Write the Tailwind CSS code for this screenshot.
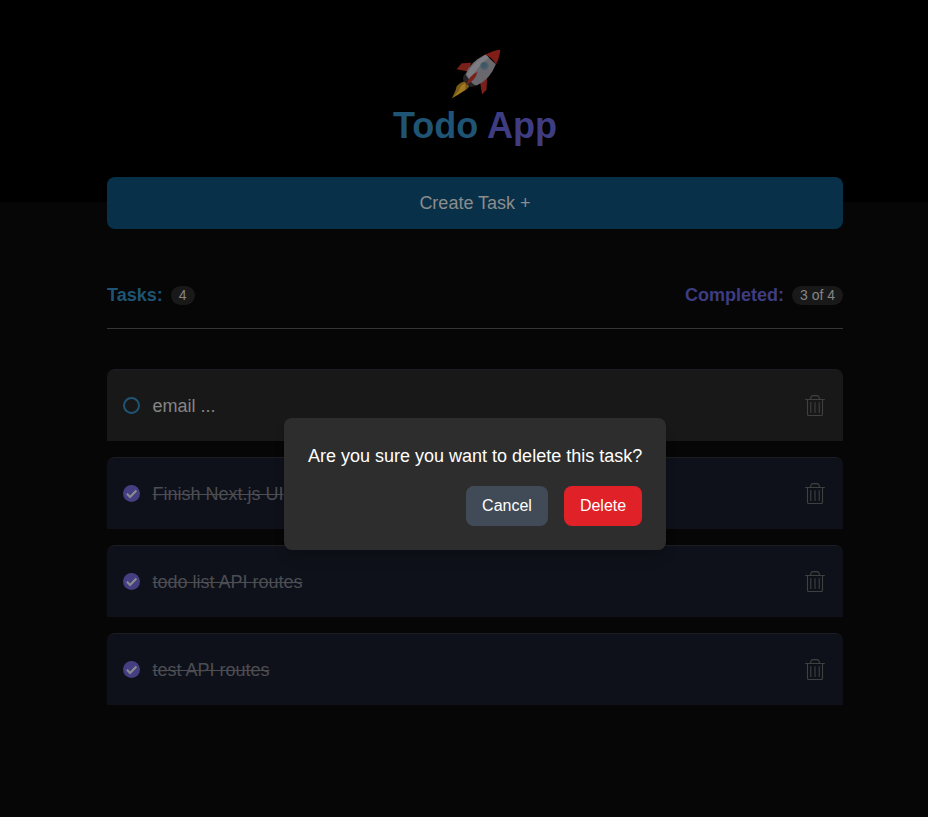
<!DOCTYPE html>
<html lang="en">
<head>
<meta charset="utf-8">
<title>Todo App</title>
<script src="https://cdn.jsdelivr.net/npm/@tailwindcss/browser@4"></script>
</head>
<body class="overflow-hidden bg-[#060606]">
<svg class="hidden">
  <symbol id="trash" viewBox="0 0 20 22">
    <g fill="none" stroke="currentColor" stroke-width="1.1" stroke-linecap="round" stroke-linejoin="round">
      <path d="M.6 4.5h18.8M2.5 4.5v14.7q0 1.3 1.3 1.3h12.4q1.3 0 1.3-1.3V4.5M5.6 4.3V4Q5.7.6 8.4.6h3.2q2.7 0 2.8 3.4v.3M5.8 7.5v10M10 7.5v10M14.2 7.5v10"/>
    </g>
  </symbol>
  <symbol id="check" viewBox="0 0 17 17">
    <circle cx="8.5" cy="8.5" r="8.5" fill="#433f82"/>
    <path d="M3.9 8.7l3.2 3.2 6.3-6.5" fill="none" stroke="#8c8c8c" stroke-width="2.1"/>
  </symbol>
</svg>
<div class="relative h-[817px] w-[950px] overflow-hidden font-['Liberation_Sans',Arial,sans-serif] text-lg">
  <header class="flex h-[202px] flex-col items-center bg-black pt-[49px]">
    <svg class="h-[51px] w-[51px]" viewBox="30 27 148 148" aria-label="Rocket">
      <path d="M78 119Q57 124 49 136Q48 146 35 171Q56 159 70 149Q87 142 87 126Z" fill="#7c5b16"/>
      <path d="M75 126Q59 132 57 147L40 166Q61 154 74 146Z" fill="#a07a22"/>
      <path d="M92 67L64 68L49 86L83 92ZM121 120L138 106L136 145L123 159L117 122Z" fill="#782019"/>
      <path d="M73 99Q66 108 68 118L88 137Q100 138 108 130Z" fill="#242426"/>
      <path d="M75 101Q87 65 133 43L163 71Q146 116 107 133Q96 133 75 101Z" fill="#68686e"/>
      <path d="M78 101Q94 69 133 43L143 52Q108 78 89 116Z" fill="#7c7c82"/>
      <path d="M132 44Q153 31 176 29Q174 53 163 72Q152 50 132 44Z" fill="#811d17"/>
      <circle cx="130" cy="76" r="12" fill="#4d5e68"/><circle cx="128" cy="74" r="8" fill="#3c5968"/>
      <path d="M110 94Q88 102 76 132Q103 120 110 94Z" fill="#792019"/>
    </svg>
    <h1 class="mt-1.5 text-4xl leading-10 font-bold text-[#1f5475]">Todo <span class="text-[#3e3c82]">App</span></h1>
  </header>
  <main class="mx-auto -mt-[25px] w-[736px]">
    <button class="block h-[52px] w-full rounded-lg bg-[#083149] text-[#8c8c8c]">Create Task +</button>
    <div class="mt-14 flex h-[44px] justify-between border-b border-[#343439] font-bold">
      <div class="flex h-5 items-center gap-2 text-[#1f5475]">Tasks: <span class="flex h-[19px] items-center rounded-full bg-[#191919] px-2 text-sm font-normal text-[#858585]">4</span></div>
      <div class="flex h-5 items-center gap-2 text-[#3e3c82]">Completed: <span class="flex h-[19px] items-center rounded-full bg-[#191919] px-2 text-sm font-normal text-[#858585]">3 of 4</span></div>
    </div>
    <ul class="mt-10 flex flex-col gap-4">
      <li class="flex h-[72px] items-center rounded-t-lg border-t border-[#1c1d23] bg-[#181818] pr-[18px] pl-4 text-[#858585]">
        <span class="mr-[12.5px] h-[17px] w-[17px] rounded-full border-2 border-[#1f5475]"></span><span class="grow">email ...</span><svg class="h-[22px] w-5 text-[#404040]"><use href="#trash"/></svg>
      </li>
      <li class="flex h-[72px] items-center rounded-t-lg border-t border-[#1c1d23] bg-[#0e1119] pr-[18px] pl-4 text-[#4c4d53]">
        <svg class="mr-[12.5px] h-[17px] w-[17px]"><use href="#check"/></svg><span class="grow line-through">Finish Next.js UI</span><svg class="h-[22px] w-5 text-[#404040]"><use href="#trash"/></svg>
      </li>
      <li class="flex h-[72px] items-center rounded-t-lg border-t border-[#1c1d23] bg-[#0e1119] pr-[18px] pl-4 text-[#4c4d53]">
        <svg class="mr-[12.5px] h-[17px] w-[17px]"><use href="#check"/></svg><span class="grow line-through">todo list API routes</span><svg class="h-[22px] w-5 text-[#404040]"><use href="#trash"/></svg>
      </li>
      <li class="flex h-[72px] items-center rounded-t-lg border-t border-[#1c1d23] bg-[#0e1119] pr-[18px] pl-4 text-[#4c4d53]">
        <svg class="mr-[12.5px] h-[17px] w-[17px]"><use href="#check"/></svg><span class="grow line-through">test API routes</span><svg class="h-[22px] w-5 text-[#404040]"><use href="#trash"/></svg>
      </li>
    </ul>
  </main>
  <div role="dialog" class="absolute top-[418px] left-[284px] h-[132px] w-[382px] rounded-lg bg-[#2d2d2d] p-6 text-white shadow-lg">
    <p class="whitespace-nowrap">Are you sure you want to delete this task?</p>
    <div class="mt-4 flex justify-end gap-4 text-base">
      <button class="h-10 w-[82px] rounded-lg bg-[#414b57]">Cancel</button>
      <button class="h-10 w-[78px] rounded-lg bg-[#e02128]">Delete</button>
    </div>
  </div>
</div>
</body>
</html>
